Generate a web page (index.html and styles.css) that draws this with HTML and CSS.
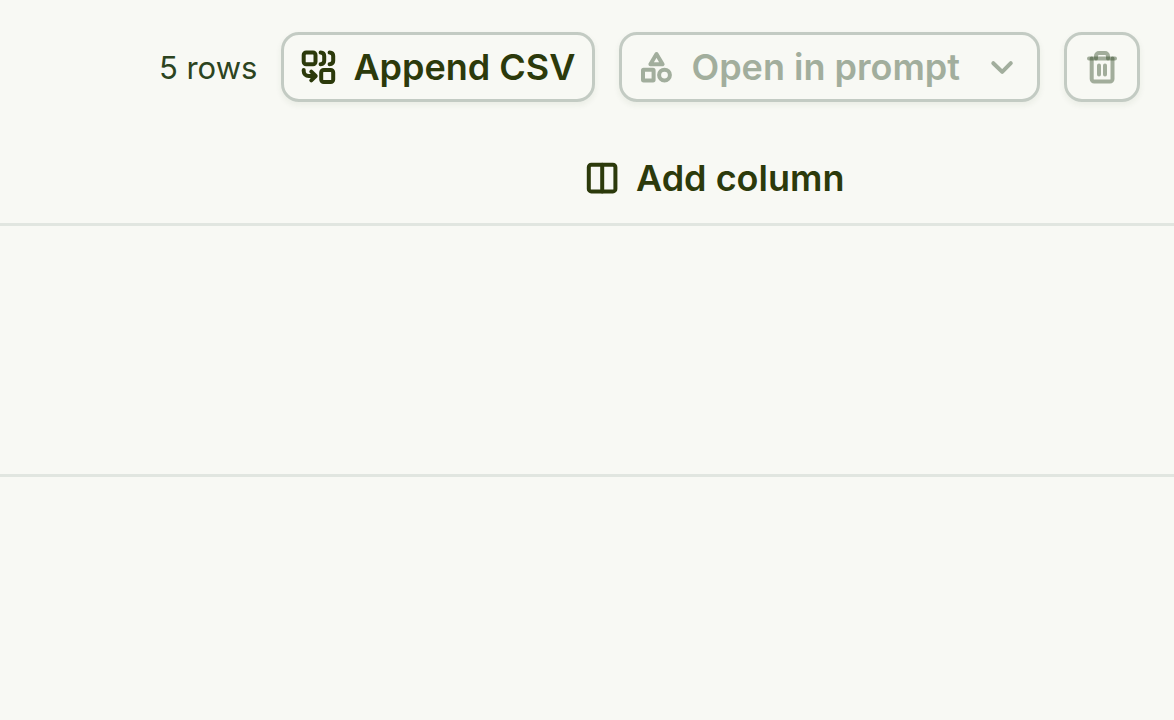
FILE: index.html
```
<!DOCTYPE html>
<html lang="en">
<head>
  <meta charset="UTF-8">
  <meta name="viewport" content="width=device-width, initial-scale=1.0">
  <link rel="stylesheet" href="styles.css">
  <title>Dataset</title>
</head>
<body>
  <header class="toolbar">
    <span class="row-count">5 rows</span>
    <button class="btn" type="button">
      <svg class="icon" viewBox="0 0 36 36" aria-hidden="true">
        <rect x="2.7" y="3.5" width="11.8" height="11.8" rx="2.5"/>
        <rect x="20.2" y="21" width="12" height="12" rx="2.5"/>
        <path d="M19.6 3.6C22.4 3.8 23.2 5 23.2 7V11.8C23.2 13.8 22.4 15 19.6 15.2"/>
        <path d="M28.6 3.6C31.4 3.8 32.2 5 32.2 7V11.8C32.2 13.8 31.4 15 28.6 15.2"/>
        <path d="M2.7 21V22a5 5 0 0 0 5 5H14M10.3 22.6l4.4 4.4-4.4 4.4"/>
      </svg>
      Append CSV
    </button>
    <button class="btn btn-menu" type="button" disabled>
      <svg class="icon" viewBox="0 0 36 36" aria-hidden="true">
        <path d="M17.5 5L23.6 15.2H11.4Z"/>
        <rect x="4" y="20.8" width="10.6" height="10.6" rx="0.6"/>
        <circle cx="25.5" cy="26.1" r="5.4"/>
      </svg>
      Open in prompt
      <svg class="icon chevron" viewBox="0 0 36 36" aria-hidden="true">
        <path d="M9.3 14.2L18.2 22.9L26.8 14.2"/>
      </svg>
    </button>
    <button class="btn btn-icon" type="button" aria-label="Delete rows" disabled>
      <svg class="icon trash" viewBox="0 0 36 36" aria-hidden="true">
        <path d="M5 9.5H31"/>
        <path d="M12 9.5V7a3 3 0 0 1 3-3H21a3 3 0 0 1 3 3V9.5"/>
        <path d="M7.7 9.5V30a2.5 2.5 0 0 0 2.5 2.5H26a2.5 2.5 0 0 0 2.5-2.5V9.5"/>
        <path d="M15 16.5V25.5M21 16.5V25.5"/>
      </svg>
    </button>
  </header>

  <main class="grid">
    <div class="grid-head">
      <button class="add-column" type="button">
        <svg class="icon" viewBox="0 0 36 36" aria-hidden="true">
          <rect x="4.8" y="4.8" width="26.6" height="26.6" rx="2.5"/>
          <path d="M18.2 4.8V31.4"/>
        </svg>
        Add column
      </button>
    </div>
    <div class="grid-row"></div>
  </main>
</body>
</html>
```
FILE: styles.css
```
body {
  margin: 0;
  font-family: Inter, "Liberation Sans", sans-serif;
  background-color: #f8f9f4;
  color: #2c3a0b;
}

.toolbar {
  display: flex;
  justify-content: flex-end;
  align-items: center;
  gap: 24px;
  padding: 32px 34px 0;
}

.row-count {
  font-size: 31px;
  color: #2c4420;
}

.btn,
.add-column {
  display: flex;
  align-items: center;
  gap: 16px;
  font-family: inherit;
  font-size: 36px;
  font-weight: 600;
  line-height: 44px;
  white-space: nowrap;
  color: #2c3a0b;
  background: none;
  cursor: pointer;
}

.btn {
  box-sizing: border-box;
  height: 70px;
  padding: 0 17px;
  border: 3px solid #c3cbc3;
  border-radius: 18px;
  box-shadow: 0 3px 6px rgba(44, 68, 32, 0.07);
}

.btn:disabled {
  color: #a2ae9d;
  cursor: default;
}

.icon {
  flex: none;
  width: 36px;
  height: 36px;
  fill: none;
  stroke: currentColor;
  stroke-width: 4;
  stroke-linecap: round;
  stroke-linejoin: round;
}

.chevron {
  margin-left: 8px;
}

.trash path {
  stroke: #2c4420;
  stroke-opacity: 0.42;
}

.grid-head {
  box-sizing: border-box;
  height: 124px;
  padding: 54px 0 0 calc(50% - 3px);
  border-bottom: 3px solid #e1e6e0;
}

.add-column {
  padding: 0;
  border: none;
}

.grid-row {
  height: 248px;
  border-bottom: 3px solid #e1e6e0;
}
```
